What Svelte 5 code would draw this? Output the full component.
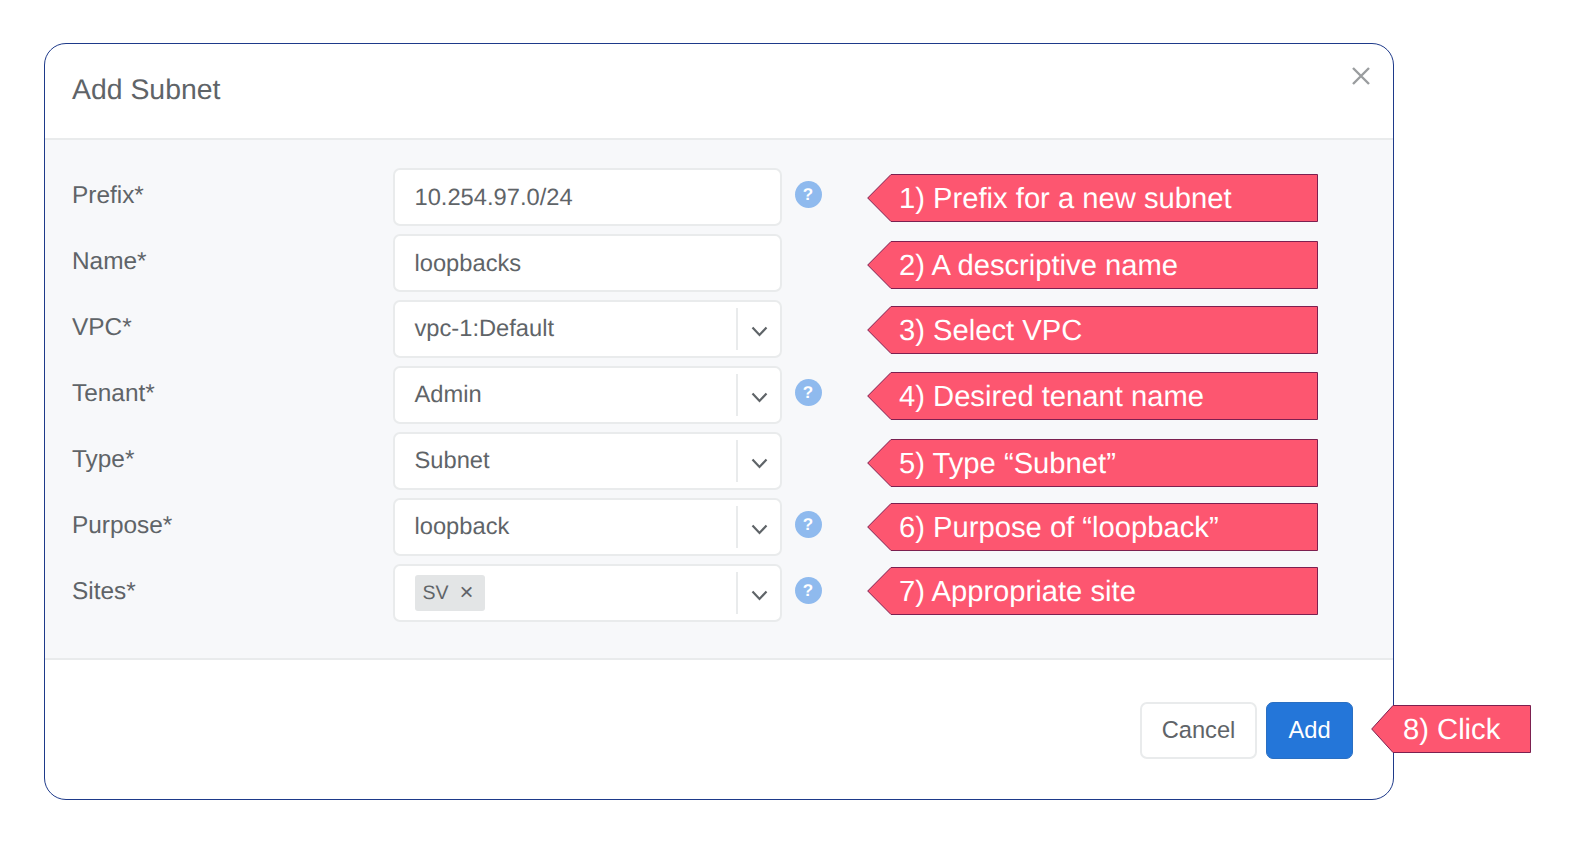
<script>
  const fields = [
    { label: "Prefix*", value: "10.254.97.0/24", help: true },
    { label: "Name*", value: "loopbacks" },
    { label: "VPC*", value: "vpc-1:Default", select: true },
    { label: "Tenant*", value: "Admin", select: true, help: true },
    { label: "Type*", value: "Subnet", select: true },
    { label: "Purpose*", value: "loopback", select: true, help: true },
    { label: "Sites*", tag: "SV", select: true, help: true }
  ]

  const notes = [
    { text: "1) Prefix for a new subnet", top: 174 },
    { text: "2) A descriptive name", top: 241 },
    { text: "3) Select VPC", top: 306 },
    { text: "4) Desired tenant name", top: 372 },
    { text: "5) Type “Subnet”", top: 439 },
    { text: "6) Purpose of “loopback”", top: 503 },
    { text: "7) Appropriate site", top: 567 }
  ]
</script>

<div class="page">
  <div class="modal">
    <header>
      <h2>Add Subnet</h2>
      <svg class="close" width="20" height="20" viewBox="0 0 20 20">
        <path d="M2 2 L18 18 M18 2 L2 18" />
      </svg>
    </header>

    <div class="form">
      {#each fields as f}
        <div class="row">
          <div class="label">{f.label}</div>
          <div class="control">
            <div class="value" class:plain={!f.select}>
              {#if f.tag}
                <span class="tag">{f.tag}<span class="x">×</span></span>
              {:else}
                {f.value}
              {/if}
            </div>
            {#if f.select}
              <div class="sep"></div>
              <svg class="chev" width="17" height="11" viewBox="0 0 17 11">
                <path d="M1.5 1.5 L8.5 9 L15.5 1.5" />
              </svg>
            {/if}
          </div>
          {#if f.help}
            <div class="help">?</div>
          {/if}
        </div>
      {/each}
    </div>

    <footer>
      <button class="cancel">Cancel</button>
      <button class="add">Add</button>
    </footer>
  </div>

  {#each notes as n}
    <div class="note" style="top: {n.top}px">
      <svg viewBox="0 0 451 48" preserveAspectRatio="none">
        <polygon points="24,0.5 450.5,0.5 450.5,47.5 24,47.5 0.7,24" />
      </svg>
      <span>{n.text}</span>
    </div>
  {/each}

  <div class="note click">
    <svg viewBox="0 0 160 48" preserveAspectRatio="none">
      <polygon points="22,0.5 159.5,0.5 159.5,47.5 22,47.5 0.7,24" />
    </svg>
    <span>8) Click</span>
  </div>
</div>

<style>
  :global(body) {
    background: #fff;
  }

  .page {
    position: relative;
    width: 1573px;
    height: 846px;
    padding: 43px 0 0 44px;
    box-sizing: border-box;
    overflow: hidden;
    font-family: "Liberation Sans", Arial, sans-serif;
    color: #5f6468;
    text-rendering: geometricPrecision;
  }

  .modal {
    width: 1350px;
    height: 757px;
    box-sizing: border-box;
    border: 1.5px solid #1e3a8a;
    border-radius: 22px;
    background: #fff;
    display: flex;
    flex-direction: column;
    overflow: hidden;
  }

  header {
    height: 94px;
    flex: none;
    display: flex;
    align-items: flex-start;
    justify-content: space-between;
    padding: 0 13px 0 27px;
    border-bottom: 2px solid #e9ebec;
  }

  h2 {
    margin: 29px 0 0;
    font-size: 28.4px;
    font-weight: normal;
    line-height: 34px;
  }

  .close {
    margin-top: 22px;
    margin-right: 9px;
  }

  .close path {
    stroke: #9a9d9f;
    stroke-width: 2.4;
    fill: none;
  }

  .form {
    height: 520px;
    flex: none;
    box-sizing: border-box;
    background: #f7f8fa;
    border-bottom: 2px solid #e9ebec;
    padding: 29px 0 0 27px;
    display: flex;
    flex-direction: column;
    gap: 10px;
  }

  .row {
    display: flex;
    align-items: center;
    height: 56px;
  }

  .label {
    width: 320.5px;
    font-size: 24.4px;
    margin-top: -3px;
  }

  .control {
    width: 389px;
    height: 58px;
    flex: none;
    box-sizing: border-box;
    border: 2px solid #e9ebec;
    border-radius: 7px;
    background: #fff;
    display: flex;
    align-items: center;
    font-size: 23.7px;
  }

  .value {
    flex: 1;
    padding-left: 20px;
    display: flex;
    align-items: center;
  }

  .value.plain {
    padding-top: 2px;
  }

  .sep {
    width: 2px;
    height: 42px;
    background: #e9ebec;
  }

  .chev {
    margin: 4px 12px 0 13px;
  }

  .chev path {
    stroke: #5f6468;
    stroke-width: 2.2;
    fill: none;
  }

  .tag {
    display: flex;
    align-items: center;
    height: 36px;
    width: 70px;
    box-sizing: border-box;
    padding-left: 8px;
    background: #e3e5e6;
    border-radius: 3px;
    font-size: 19.5px;
  }

  .x {
    margin-left: 11px;
    font-size: 24px;
    line-height: 24px;
  }

  .help {
    width: 27px;
    height: 27px;
    margin-left: 13px;
    margin-top: -5px;
    border-radius: 50%;
    background: #8fbaee;
    color: #fff;
    font-size: 17px;
    font-weight: bold;
    text-align: center;
    line-height: 27px;
  }

  footer {
    flex: 1;
    display: flex;
    justify-content: flex-end;
    align-items: flex-start;
    gap: 9px;
    padding: 42px 40px 0 0;
  }

  button {
    height: 57px;
    border-radius: 7px;
    font: inherit;
    font-size: 23.7px;
    padding: 0;
  }

  .cancel {
    width: 117px;
    background: #fff;
    color: #5f6468;
    border: 2px solid #e9ebec;
  }

  .add {
    width: 87px;
    background: #2476d9;
    color: #fff;
    border: 1px solid #2a6fc2;
  }

  .note {
    position: absolute;
    left: 867px;
    width: 451px;
    height: 48px;
    display: flex;
    align-items: center;
  }

  .note svg {
    position: absolute;
    inset: 0;
    width: 100%;
    height: 100%;
  }

  .note polygon {
    fill: #fd5670;
    stroke: #7c2050;
    stroke-width: 1;
  }

  .note span {
    position: relative;
    padding: 3px 0 0 32px;
    color: #fff;
    font-size: 29.2px;
    white-space: nowrap;
  }

  .click {
    left: 1371px;
    top: 705px;
    width: 160px;
  }
</style>
